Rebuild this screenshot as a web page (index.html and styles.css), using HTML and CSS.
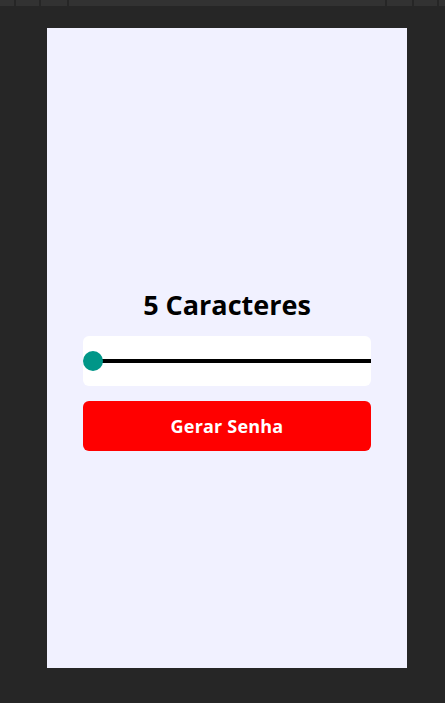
FILE: index.html
```html
<!DOCTYPE html>
<html lang="pt-BR">
<head>
<meta charset="utf-8">
<title>Gerador de Senha</title>
<link rel="stylesheet" href="styles.css">
</head>
<body>
<div class="topbar">
  <span class="sep s1"></span><span class="sep s2"></span><span class="sep s3"></span>
  <span class="spacer"></span>
  <span class="sep s4"></span><span class="sep s5"></span><span class="sep s6"></span>
</div>
<main class="screen">
  <div class="content">
    <h1 class="title">5 Caracteres</h1>
    <div class="slider-box">
      <div class="track">
        <span class="thumb"></span>
      </div>
    </div>
    <button class="btn">Gerar Senha</button>
  </div>
</main>
</body>
</html>
```
FILE: styles.css
```css
html, body {
  margin: 0;
  padding: 0;
}
body {
  background: #262626;
  width: 445px;
  height: 703px;
  overflow: hidden;
  font-family: "Open Sans", "Noto Sans", sans-serif;
}
.topbar {
  height: 6px;
  background: #323232;
  display: flex;
}
.sep {
  width: 2px;
  height: 6px;
  background: #262626;
}
.s1 { margin-left: 14px; }
.s2 { margin-left: 23px; }
.s3 { margin-left: 26px; }
.spacer { flex: 1; }
.s4 { margin-right: 25px; }
.s5 { margin-right: 23px; }
.s6 { margin-right: 6px; }
.screen {
  margin: 22px 0 0 47px;
  width: 360px;
  height: 640px;
  background: #f1f1ff;
  display: flex;
  flex-direction: column;
  justify-content: center;
}
.content {
  padding: 44px 36px 0;
  display: flex;
  flex-direction: column;
}
.title {
  margin: 0 0 15px;
  text-align: center;
  font-size: 27px;
  font-weight: 700;
  line-height: 32px;
  color: #000;
}
.slider-box {
  height: 50px;
  background: #fff;
  border-radius: 6px;
  display: flex;
  align-items: center;
}
.track {
  position: relative;
  margin-left: 10px;
  flex: 1;
  height: 4px;
  background: #000;
}
.thumb {
  position: absolute;
  left: -10px;
  top: -8px;
  width: 20px;
  height: 20px;
  border-radius: 50%;
  background: #009688;
}
.btn {
  margin-top: 15px;
  height: 50px;
  border: none;
  border-radius: 6px;
  background: #ff0000;
  color: #fff;
  font-family: inherit;
  font-size: 18px;
  font-weight: 700;
  letter-spacing: 0.2px;
}
```
